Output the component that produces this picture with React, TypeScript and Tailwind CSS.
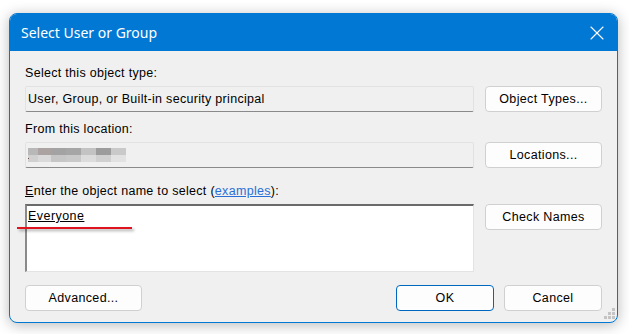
import { X } from 'lucide-react';

const pixelRows = [
  ['#b8b8b8', '#aaa3a2', '#a3a3a3', '#a6a6a6', '#c3c3c3', '#9c9c9c', '#c9c9c9'],
  ['#d0d0d0', '#dadada', '#c6c6c6', '#c9c9c9', '#dcdcdc', '#d0d0d0', '#e2e2e2'],
];
const pixelWidths = ['w-[10px]', 'w-[13px]', 'w-[15px]', 'w-[15px]', 'w-[15px]', 'w-[15px]', 'w-[15px]'];

const DlgButton = ({ label, primary = false }: { label: string; primary?: boolean }) => (
  <button
    className={
      'h-[26px] w-full rounded-[4px] border bg-[#fdfdfd] text-[12.5px] tracking-[0.35px] text-black ' +
      (primary ? 'border-[#0067c0]' : 'border-[#d0d0d0]')
    }
  >
    {label}
  </button>
);

const App = () => {
  return (
    <div
      className="min-h-screen bg-white pt-[13px] pl-[9px]"
      style={{ fontFamily: '"Liberation Sans", Arial, sans-serif' }}
    >
      <div className="relative flex h-[310px] w-[609px] flex-col overflow-hidden rounded-[8px] border border-[#0078d4] bg-[#f0f0f0] shadow-[0_2px_14px_rgba(0,0,0,0.28)]">
        {/* title bar */}
        <div className="flex h-[37px] shrink-0 items-center justify-between bg-[#0078d4] pl-[11px] pr-[8px]">
          <span className="text-[14px] text-white" style={{ fontFamily: '"Noto Sans", sans-serif' }}>
            Select User or Group
          </span>
          <X size={24} strokeWidth={1.1} className="text-white" />
        </div>

        <div className="flex flex-col px-[15px] pt-[14px]">
          <div className="h-4 text-[12.5px] leading-4 tracking-[0.3px] text-black">Select this object type:</div>
          <div className="mt-[5px] grid grid-cols-[449px_117px] gap-x-[11px]">
            <div className="flex h-[26px] items-center rounded-[2px] border border-[#e2e2e2] border-b-[#8a8a8a] pl-[2px] text-[12.5px] tracking-[0.3px] text-black">
              User, Group, or Built-in security principal
            </div>
            <DlgButton label="Object Types..." />
          </div>

          <div className="mt-[9px] h-4 text-[12.5px] leading-4 tracking-[0.3px] text-black">From this location:</div>
          <div className="mt-[5px] grid grid-cols-[449px_117px] gap-x-[11px]">
            <div className="relative flex h-[26px] flex-col justify-center rounded-[2px] border border-[#e2e2e2] border-b-[#8a8a8a] pl-[2px]">
              {pixelRows.map((row, r) => (
                <div key={r} className="flex h-[7px]">
                  {row.map((c, i) => (
                    <div key={i} className={pixelWidths[i] + ' h-[7px]'} style={{ backgroundColor: c }} />
                  ))}
                </div>
              ))}
              <div className="absolute left-[2px] top-[15px] h-px w-px bg-[#7a4a4a]" />
            </div>
            <DlgButton label="Locations..." />
          </div>

          <div className="mt-[15px] h-4 text-[12.5px] leading-4 tracking-[0.3px] text-black">
            <span className="underline">E</span>nter the object name to select (<span className="text-[#2a6fd6] underline">examples</span>):
          </div>
          <div className="mt-[5px] grid grid-cols-[449px_117px] gap-x-[11px]">
            <div className="h-[68px] border-b border-l-2 border-r border-t-2 border-b-[#e3e3e3] border-l-[#8a8a8a] border-r-[#e3e3e3] border-t-[#6a6a6a] bg-white pl-[1px] pt-[2px] text-[12.5px] leading-4 tracking-[0.45px] text-black">
              <span className="underline">Everyone</span>
            </div>
            <div>
              <DlgButton label="Check Names" />
            </div>
          </div>

          <div className="mt-[13px] flex items-center">
            <div className="w-[117px]">
              <DlgButton label="Advanced..." />
            </div>
            <div className="ml-auto flex gap-[10px]">
              <div className="w-[98px]">
                <DlgButton label="OK" primary />
              </div>
              <div className="w-[98px]">
                <DlgButton label="Cancel" />
              </div>
            </div>
          </div>
        </div>

        {/* red annotation line */}
        <div className="absolute left-[7px] top-[213px] h-[2px] w-[115px] bg-[#e0141e] shadow-[2px_2px_3px_rgba(0,0,0,0.35)]" />

        {/* resize grip */}
        <svg className="absolute bottom-[2px] right-[1px]" width="12" height="12" viewBox="0 0 12 12">
          <rect x="8" y="0" width="3" height="3" fill="#c4c4c4" />
          <rect x="4" y="4" width="3" height="3" fill="#c4c4c4" />
          <rect x="8" y="4" width="3" height="3" fill="#c4c4c4" />
          <rect x="0" y="8" width="3" height="3" fill="#c4c4c4" />
          <rect x="4" y="8" width="3" height="3" fill="#c4c4c4" />
          <rect x="8" y="8" width="3" height="3" fill="#c4c4c4" />
        </svg>
      </div>
    </div>
  );
};

export default App;
